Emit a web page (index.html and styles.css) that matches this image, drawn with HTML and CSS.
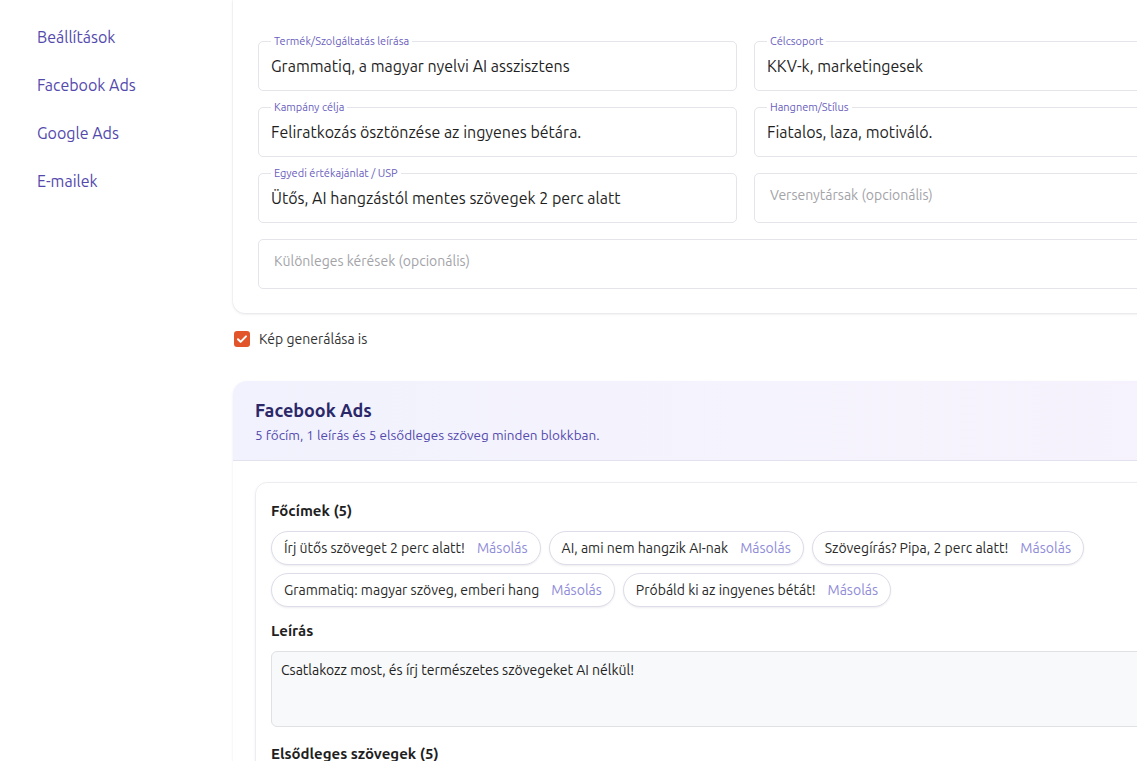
FILE: index.html
```html
<!DOCTYPE html>
<html lang="hu">
<head>
<meta charset="utf-8">
<title>Grammatiq</title>
<link rel="stylesheet" href="styles.css">
</head>
<body>
<div class="layout">
  <nav class="sidebar">
    <a class="nav-link" href="#">Beállítások</a>
    <a class="nav-link" href="#">Facebook Ads</a>
    <a class="nav-link" href="#">Google Ads</a>
    <a class="nav-link" href="#">E-mailek</a>
  </nav>
  <main class="main">
    <section class="form-card">
      <div class="field-grid">
        <div class="field"><span class="field-label">Termék/Szolgáltatás leírása</span><span class="field-value">Grammatiq, a magyar nyelvi AI asszisztens</span></div>
        <div class="field"><span class="field-label">Célcsoport</span><span class="field-value">KKV-k, marketingesek</span></div>
        <div class="field"><span class="field-label">Kampány célja</span><span class="field-value">Feliratkozás ösztönzése az ingyenes bétára.</span></div>
        <div class="field"><span class="field-label">Hangnem/Stílus</span><span class="field-value">Fiatalos, laza, motiváló.</span></div>
        <div class="field"><span class="field-label">Egyedi értékajánlat / USP</span><span class="field-value">Ütős, AI hangzástól mentes szövegek 2 perc alatt</span></div>
        <div class="field"><span class="field-placeholder">Versenytársak (opcionális)</span></div>
        <div class="field field-wide"><span class="field-placeholder">Különleges kérések (opcionális)</span></div>
      </div>
    </section>

    <label class="check-row">
      <span class="checkbox"><svg viewBox="0 0 16 16" width="16" height="16"><path d="M4 8.3l2.6 2.6L12 5.4" fill="none" stroke="#fff" stroke-width="2" stroke-linecap="round" stroke-linejoin="round"/></svg></span>
      <span class="check-label">Kép generálása is</span>
    </label>

    <section class="ads-card">
      <header class="ads-header">
        <h2 class="ads-title">Facebook Ads</h2>
        <p class="ads-sub">5 főcím, 1 leírás és 5 elsődleges szöveg minden blokkban.</p>
      </header>
      <div class="ads-body">
        <div class="block">
          <h3 class="block-title">Főcímek (5)</h3>
          <div class="chips">
            <span class="chip"><span class="chip-text">Írj ütős szöveget 2 perc alatt!</span><span class="chip-copy">Másolás</span></span>
            <span class="chip"><span class="chip-text">AI, ami nem hangzik AI-nak</span><span class="chip-copy">Másolás</span></span>
            <span class="chip"><span class="chip-text">Szövegírás? Pipa, 2 perc alatt!</span><span class="chip-copy">Másolás</span></span>
            <span class="chip"><span class="chip-text">Grammatiq: magyar szöveg, emberi hang</span><span class="chip-copy">Másolás</span></span>
            <span class="chip"><span class="chip-text">Próbáld ki az ingyenes bétát!</span><span class="chip-copy">Másolás</span></span>
          </div>
          <h3 class="block-title block-title-gap">Leírás</h3>
          <div class="textarea">Csatlakozz most, és írj természetes szövegeket AI nélkül!</div>
          <h3 class="block-title block-title-gap2">Elsődleges szövegek (5)</h3>
        </div>
      </div>
    </section>
  </main>
</div>
</body>
</html>
```
FILE: styles.css
```css
* { box-sizing: border-box; }
html, body { margin: 0; padding: 0; background: #fff; overflow: hidden; }
body {
  font-family: Ubuntu, "Noto Sans", "Open Sans", sans-serif;
  color: #222;
  width: 1137px;
  height: 761px;
}
.layout { display: flex; align-items: flex-start; }

.sidebar {
  flex: none;
  width: 233px;
  padding: 25px 0 0 37px;
  display: flex;
  flex-direction: column;
  gap: 24px;
}
.nav-link {
  font-size: 16px;
  line-height: 24px;
  color: #5349ad;
  text-decoration: none;
}

.main {
  flex: none;
  width: 1025px;
  padding-top: 0;
}

.form-card {
  background: #fff;
  border-radius: 0 0 12px 12px;
  box-shadow: 0 1px 3px rgba(20, 20, 60, 0.10), 0 0 0 1px rgba(20, 20, 60, 0.025);
  padding: 41px 25px 24px;
}
.field-grid {
  display: grid;
  grid-template-columns: 1fr 1fr;
  gap: 16px 17px;
}
.field {
  position: relative;
  height: 50px;
  border: 1px solid #e4e4ea;
  border-radius: 5px;
  display: flex;
  align-items: center;
  padding: 0 12px 0 12px;
}
.field-wide { grid-column: 1 / -1; }
.field-label {
  position: absolute;
  top: -8px;
  left: 12px;
  padding: 0 3px;
  background: #fff;
  font-size: 11px;
  line-height: 14px;
  color: #6a60bd;
}
.field-value {
  font-size: 16px;
  color: #1f1f1f;
  margin-top: -1px;
}
.field-placeholder {
  font-size: 14px;
  color: #a3a3a8;
  padding-left: 3px;
  margin-top: -6px;
}

.check-row {
  display: flex;
  align-items: center;
  gap: 9px;
  margin: 18px 0 0 1px;
  height: 16px;
}
.checkbox {
  width: 16px;
  height: 16px;
  border-radius: 3px;
  background: #e2552b;
  display: block;
}
.checkbox svg { display: block; }
.check-label { font-size: 14px; color: #333; }

.ads-card {
  margin-top: 34px;
  border-radius: 14px;
  background: #fff;
  box-shadow: 0 1px 3px rgba(20, 20, 60, 0.08);
  overflow: hidden;
}
.ads-header {
  background: linear-gradient(90deg, #f1f2fd 0%, #f5f3fd 50%, #f7f2fd 100%);
  border-bottom: 1px solid #e2e2ee;
  padding: 18px 22px 15px;
}
.ads-title {
  margin: 0;
  font-size: 18px;
  line-height: 22px;
  font-weight: 600;
  color: #2b286a;
}
.ads-sub {
  margin: 4px 0 0;
  font-size: 13.5px;
  line-height: 20px;
  color: #5349ad;
}
.ads-body { padding: 21px 22px; }
.block {
  border: 1px solid #ececf1;
  border-radius: 12px;
  box-shadow: 0 1px 3px rgba(20, 20, 60, 0.06);
  padding: 18px 15px 20px;
}
.block-title {
  margin: 0;
  font-size: 15px;
  line-height: 20px;
  font-weight: 700;
  color: #1f1f1f;
}
.block-title-gap { margin-top: 14px; }
.block-title-gap2 { margin-top: 17px; }
.chips {
  display: flex;
  flex-wrap: wrap;
  gap: 8px;
  margin-top: 10px;
  max-width: 850px;
}
.chip {
  display: inline-flex;
  align-items: center;
  gap: 12px;
  height: 34px;
  padding: 0 12px;
  border: 1px solid #dcdde9;
  border-radius: 17px;
  box-shadow: 0 1px 2px rgba(20, 20, 60, 0.08);
  font-size: 14px;
  background: #fff;
}
.chip-text { color: #2a2a2a; }
.chip-copy { color: #8f8cd8; }
.textarea {
  margin-top: 10px;
  height: 76px;
  background: #f8f9fa;
  border: 1px solid #e0e1e4;
  border-radius: 6px;
  padding: 9px 9px;
  font-size: 14px;
  line-height: 18px;
  color: #222;
}
```
